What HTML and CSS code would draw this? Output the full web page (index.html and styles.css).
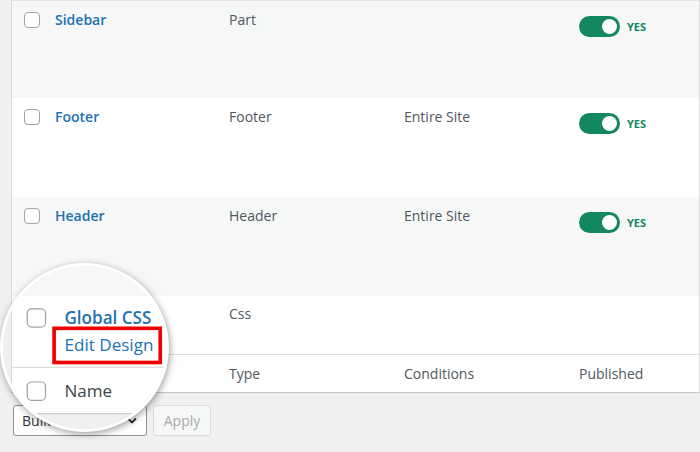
FILE: index.html
```html
<!DOCTYPE html>
<html lang="en">
<head>
<meta charset="utf-8">
<title>Templates</title>
<link rel="stylesheet" href="styles.css">
</head>
<body>
<div class="page">
  <div class="list">
    <div class="row row--alt row--first">
      <div class="cell cell--check"><span class="cb"></span></div>
      <div class="cell"><a class="title">Sidebar</a></div>
      <div class="cell">Part</div>
      <div class="cell"></div>
      <div class="cell cell--pub"><span class="toggle"><span class="knob"></span></span><span class="yes">YES</span></div>
    </div>
    <div class="row">
      <div class="cell cell--check"><span class="cb"></span></div>
      <div class="cell"><a class="title">Footer</a></div>
      <div class="cell">Footer</div>
      <div class="cell">Entire Site</div>
      <div class="cell cell--pub"><span class="toggle"><span class="knob"></span></span><span class="yes">YES</span></div>
    </div>
    <div class="row row--alt">
      <div class="cell cell--check"><span class="cb"></span></div>
      <div class="cell"><a class="title">Header</a></div>
      <div class="cell">Header</div>
      <div class="cell">Entire Site</div>
      <div class="cell cell--pub"><span class="toggle"><span class="knob"></span></span><span class="yes">YES</span></div>
    </div>
    <div class="row row--short">
      <div class="cell cell--check"><span class="cb"></span></div>
      <div class="cell"><a class="title">Global CSS</a></div>
      <div class="cell">Css</div>
      <div class="cell"></div>
      <div class="cell"></div>
    </div>
    <div class="row row--foot">
      <div class="cell cell--check"><span class="cb"></span></div>
      <div class="cell">Name</div>
      <div class="cell">Type</div>
      <div class="cell">Conditions</div>
      <div class="cell">Published</div>
    </div>
  </div>
  <div class="bulk">
    <div class="select">Bulk actions<svg class="chev" width="10" height="7" viewBox="0 0 10 7"><path d="M1 1.5 L5 5.5 L9 1.5" fill="none" stroke="#2c3338" stroke-width="1.8"/></svg></div>
    <button class="apply">Apply</button>
  </div>

  <div class="lens">
    <div class="lens-inner">
      <div class="page page--lens">
        <div class="list list--lens">
          <div class="row row--alt">
            <div class="cell cell--check"><span class="cb"></span></div>
            <div class="cell"><a class="title">Header</a></div>
            <div class="cell">Header</div>
            <div class="cell">Entire Site</div>
            <div class="cell cell--pub"><span class="toggle"><span class="knob"></span></span><span class="yes">YES</span></div>
          </div>
          <div class="row row--short">
            <div class="cell cell--check"><span class="cb"></span></div>
            <div class="cell">
              <a class="title">Global CSS</a>
              <div class="actions"><a class="edit">Edit Design</a></div>
            </div>
            <div class="cell">Css</div>
            <div class="cell"></div>
            <div class="cell"></div>
          </div>
          <div class="row row--foot">
            <div class="cell cell--check"><span class="cb"></span></div>
            <div class="cell name">Name</div>
            <div class="cell">Type</div>
            <div class="cell">Conditions</div>
            <div class="cell">Published</div>
          </div>
        </div>
        <div class="bulk">
          <div class="select">Bulk actions<svg class="chev" width="10" height="7" viewBox="0 0 10 7"><path d="M1 1.5 L5 5.5 L9 1.5" fill="none" stroke="#2c3338" stroke-width="1.8"/></svg></div>
          <button class="apply">Apply</button>
        </div>
      </div>
    </div>
  </div>
</div>
</body>
</html>
```
FILE: styles.css
```css
* { box-sizing: border-box; margin: 0; padding: 0; }
html, body { width: 700px; height: 452px; overflow: hidden; }
body {
  background: #f0f0f1;
  font-family: "Open Sans", "Noto Sans", sans-serif;
  font-size: 14px;
  color: #50575e;
}
.page {
  position: relative;
  width: 700px;
  height: 452px;
  padding-left: 11px;
}
.list {
  width: 689px;
  background: #fff;
  border-left: 1px solid #dcdcde;
  border-right: 1px solid #dcdcde;
  border-bottom: 1px solid #c3c4c7;
}
.row {
  display: grid;
  grid-template-columns: 43px 174px 175px 175px 1fr;
  height: 99px;
  background: #fff;
}
.row--alt { background: #f6f7f7; }
.row--first { height: 98px; border-top: 1px solid #e2e4e7; }
.cell {
  padding-top: 9px;
  line-height: 20px;
}
.cell--check { padding: 11px 0 0 12px; }
.cell--pub {
  padding-top: 15px;
  display: flex;
  align-items: flex-start;
  gap: 7px;
}
.cb {
  display: block;
  width: 16px;
  height: 16px;
  border: 1px solid #9ea3a8;
  border-radius: 4px;
  background: #fff;
}
.title {
  color: #2271b1;
  font-weight: 600;
  text-decoration: none;
}
.toggle {
  position: relative;
  display: block;
  width: 41px;
  height: 21px;
  border-radius: 11px;
  background: #13875d;
}
.knob {
  position: absolute;
  right: 3px;
  top: 3px;
  width: 15px;
  height: 15px;
  border-radius: 50%;
  background: #fff;
}
.yes {
  font-size: 11px;
  font-weight: 700;
  color: #15875f;
  line-height: 21px;
}
.row--short {
  height: 59px;
  border-bottom: 1px solid #dcdcde;
}
.row--short .cell { padding-top: 8px; }
.row--short .cell--check { padding-top: 10px; }
.row--foot {
  height: 37px;
  align-items: center;
}
.row--foot .cell { padding-top: 0; }
.row--foot .cell--check { padding-top: 0; }
.actions {
  display: flex;
  margin-top: -3px;
}
.edit {
  display: block;
  margin-left: -10px;
  padding: 2px 4px 3px 7px;
  border: 3px solid #ee0000;
  color: #2271b1;
  font-weight: 500;
  line-height: 20px;
  text-decoration: none;
}
.bulk {
  display: flex;
  gap: 6px;
  margin-top: 12px;
  padding-left: 2px;
}
.select {
  width: 134px;
  height: 31px;
  border: 1px solid #8c8f94;
  border-radius: 3px;
  background: #fff;
  color: #2c3338;
  line-height: 29px;
  padding-left: 8px;
  display: flex;
  align-items: center;
  justify-content: space-between;
  padding-right: 9px;
}
.apply {
  width: 58px;
  height: 31px;
  border: 1px solid #dcdcde;
  border-radius: 3px;
  background: #f6f7f7;
  color: #a7aaad;
  font-family: inherit;
  font-size: 14px;
}
.lens {
  position: absolute;
  left: 0;
  top: 263px;
  width: 169px;
  height: 169px;
  border: 3px solid #fff;
  border-radius: 50%;
  overflow: hidden;
  box-shadow: 1px 2px 7px rgba(0, 0, 0, 0.38);
  background: #f0f0f1;
}
.lens-inner {
  position: absolute;
  left: -3px;
  top: -266px;
  width: 700px;
  height: 452px;
  transform: scale(1.22);
  transform-origin: 12px 296px;
}
.page--lens {
  padding-top: 197px;
  background: #f0f0f1;
}
.list--lens .row--foot { color: #3c434a; }
```
